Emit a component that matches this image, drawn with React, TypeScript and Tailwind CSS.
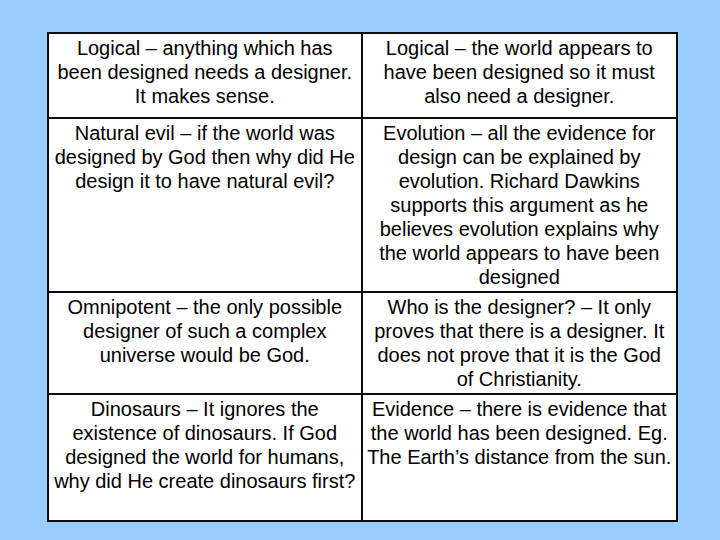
// each cell keeps the line breaks of the original slide
const rows: [string[], string[]][] = [
  [
    ['Logical – anything which has', 'been designed needs a designer.', 'It makes sense.'],
    ['Logical – the world appears to', 'have been designed so it must', 'also need a designer.'],
  ],
  [
    ['Natural evil – if the world was', 'designed by God then why did He', 'design it to have natural evil?'],
    [
      'Evolution – all the evidence for',
      'design can be explained by',
      'evolution. Richard Dawkins',
      'supports this argument as he',
      'believes evolution explains why',
      'the world appears to have been',
      'designed',
    ],
  ],
  [
    ['Omnipotent – the only possible', 'designer of such a complex', 'universe would be God.'],
    ['Who is the designer? – It only', 'proves that there is a designer. It', 'does not prove that it is the God', 'of Christianity.'],
  ],
  [
    ['Dinosaurs – It ignores the', 'existence of dinosaurs. If God', 'designed the world for humans,', 'why did He create dinosaurs first?'],
    ['Evidence – there is evidence that', 'the world has been designed. Eg.', 'The Earth’s distance from the sun.'],
  ],
];

function Cell({ lines }: { lines: string[] }) {
  return (
    <>
      {lines.map((line) => (
        <div key={line} className="whitespace-nowrap">
          {line}
        </div>
      ))}
    </>
  );
}

export default function App() {
  return (
    <div className="h-[540px] w-[720px] overflow-hidden bg-[#99ccff] pl-[47px] pt-[32px] font-['Liberation_Sans',Arial,sans-serif]">
      <div className="grid w-[631px] grid-cols-2 grid-rows-[85px_174px_102px_125px] border-2 border-[#0a0a14] bg-white text-[20px] leading-[24px] text-black">
        {rows.map(([left, right], i) => {
          const last = i === rows.length - 1;
          return [
            <div key={`l${i}`} className={`flex flex-col items-center border-r-2 border-[#0a0a14] pt-[2px] ${last ? '' : 'border-b-2'}`}>
              <Cell lines={left} />
            </div>,
            <div key={`r${i}`} className={`flex flex-col items-center border-[#0a0a14] pt-[2px] ${last ? '' : 'border-b-2'}`}>
              <Cell lines={right} />
            </div>,
          ];
        })}
      </div>
    </div>
  );
}
